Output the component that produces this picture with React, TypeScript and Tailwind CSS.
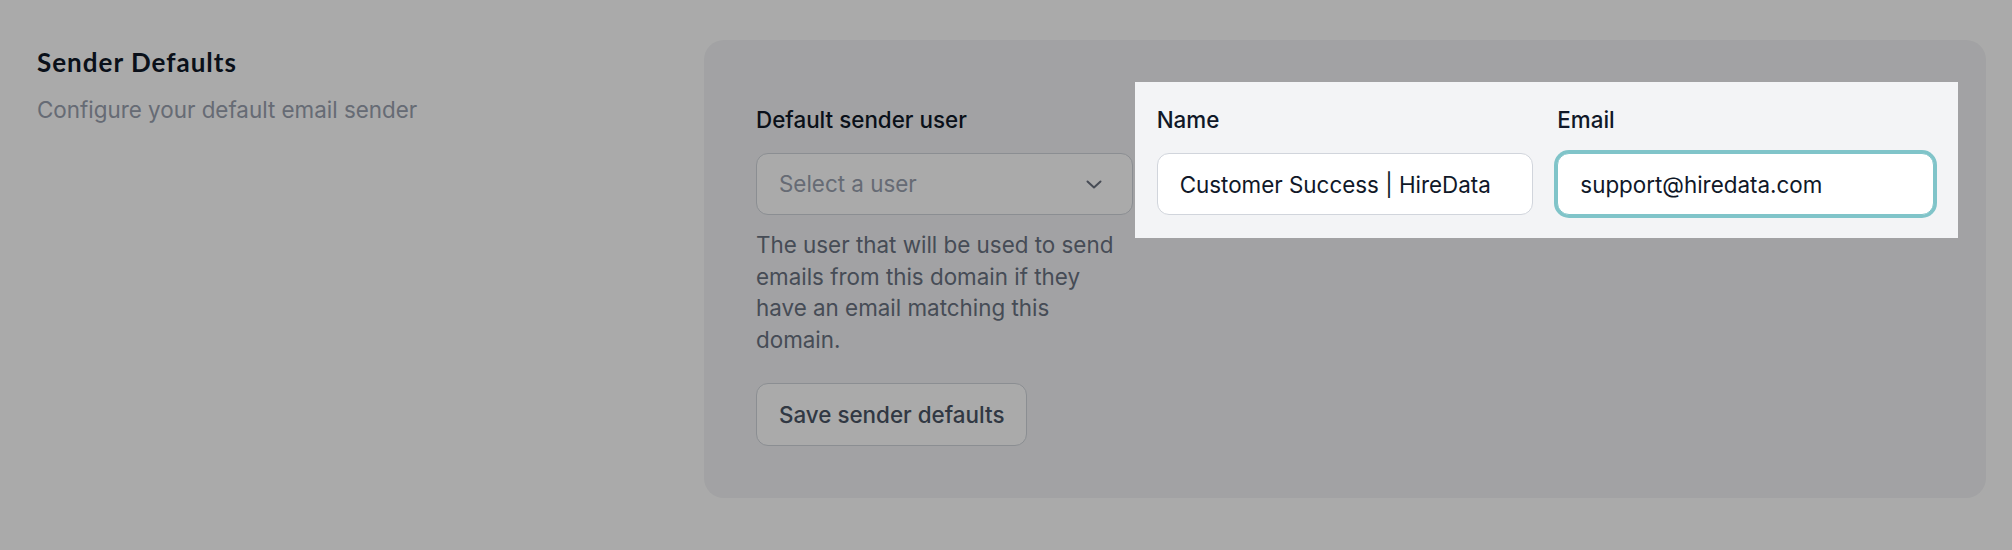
export default function App() {
  return (
    <div className="h-[550px] w-full overflow-hidden bg-white font-['Inter',sans-serif]">
      <div className="flex pt-[40px] pl-[37px]">
        {/* Section intro */}
        <div className="w-[667px] shrink-0">
          <h2 className="font-['Lato',sans-serif] text-[26px] leading-[44px] font-bold tracking-[1px] text-gray-900">
            Sender Defaults
          </h2>
          <p className="mt-[10px] text-[22.4px] leading-[31.5px] text-gray-400">
            Configure your default email sender
          </p>
        </div>

        {/* Settings card */}
        <div className="w-[1282px] shrink-0 rounded-[20px] bg-gray-100 px-[52px] pt-[64px] pb-[52px]">
          <div className="grid grid-cols-3 gap-x-[24px]">
            <div>
              <label className="block text-[22.4px] leading-[32px] font-medium text-gray-900">
                Default sender user
              </label>
              <button className="mt-[17px] flex h-[62px] w-full items-center justify-between rounded-[12px] border border-gray-300 bg-white pr-[30px] pl-[22px] text-[22.4px] text-gray-400">
                <span>Select a user</span>
                <svg width="16" height="9" viewBox="0 0 16 9" fill="none" stroke="#6b7280" strokeWidth="2" strokeLinecap="round" strokeLinejoin="round">
                  <path d="M1.5 1.5l6.5 6 6.5-6" />
                </svg>
              </button>
              <p className="mt-[14px] text-[22.4px] leading-[31.7px] text-gray-500">
                The user that will be used to send emails from this domain if they have an email matching this domain.
              </p>
              <button className="mt-[27px] h-[63px] rounded-[12px] border border-gray-300 bg-white px-[22px] text-[22.4px] font-medium text-gray-600">
                Save sender defaults
              </button>
            </div>

            {/* Highlighted tour step: name + email */}
            <div className="relative z-10 col-span-2 self-start">
              <div className="absolute -top-[22px] -right-[24px] -bottom-[23px] -left-[22px] bg-gray-100 shadow-[0_0_0_9999px_rgba(0,0,0,0.333)]" />
              <div className="relative grid grid-cols-2 gap-x-[24px]">
                <div>
                  <label className="block text-[22.4px] leading-[32px] font-medium text-gray-900">Name</label>
                  <input
                    readOnly
                    value="Customer Success | HireData"
                    className="mt-[17px] h-[62px] w-full rounded-[12px] border border-gray-300 bg-white px-[22px] text-[22.4px] text-gray-900 outline-none"
                  />
                </div>
                <div>
                  <label className="block text-[22.4px] leading-[32px] font-medium text-gray-900">Email</label>
                  <input
                    readOnly
                    value="support@hiredata.com"
                    className="mt-[17px] h-[62px] w-full rounded-[12px] border border-[#80c4c9] bg-white px-[22px] text-[22.4px] text-gray-900 outline-none ring-[3px] ring-[#80c4c9]"
                  />
                </div>
              </div>
            </div>
          </div>
        </div>
      </div>
    </div>
  );
}
